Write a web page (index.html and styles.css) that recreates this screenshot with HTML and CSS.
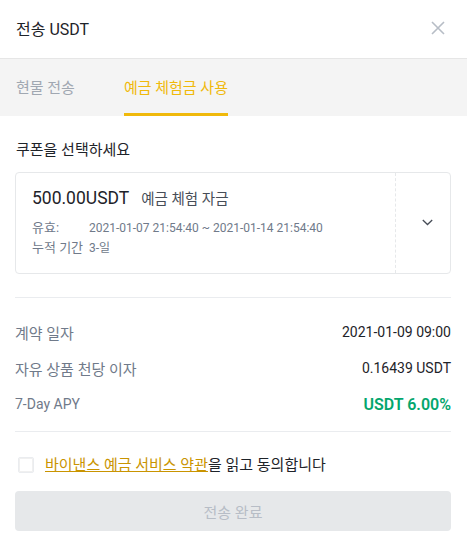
FILE: index.html
```html
<!DOCTYPE html>
<html lang="ko">
<head>
<meta charset="utf-8">
<link rel="stylesheet" href="styles.css">
</head>
<body>
<div class="modal">
  <div class="header">
    <div class="title">전송 USDT</div>
    <svg class="close" width="14" height="14" viewBox="0 0 14 14"><path d="M1 1L13 13M13 1L1 13" stroke="#b7bdc6" stroke-width="1.6" fill="none"/></svg>
  </div>
  <div class="tabs">
    <div class="tab">현물 전송</div>
    <div class="tab active">예금 체험금 사용</div>
  </div>
  <div class="body">
    <div class="section-label">쿠폰을 선택하세요</div>
    <div class="card">
      <div class="card-main">
        <div class="amount-line"><span class="amount">500.00USDT</span><span class="kind">예금 체험 자금</span></div>
        <div class="meta first"><span class="meta-label">유효:</span><span>2021-01-07 21:54:40 ~ 2021-01-14 21:54:40</span></div>
        <div class="meta"><span class="meta-label">누적 기간</span><span>3-일</span></div>
      </div>
      <div class="card-side">
        <svg width="11" height="7" viewBox="0 0 11 7"><path d="M0.8 1L5.5 5.5L10.2 1" stroke="#474d57" stroke-width="1.3" fill="none"/></svg>
      </div>
    </div>
    <div class="divider first"></div>
    <div class="rows">
      <div class="row"><span class="row-label ko">계약 일자</span><span class="row-value">2021-01-09 09:00</span></div>
      <div class="row"><span class="row-label ko">자유 상품 천당 이자</span><span class="row-value">0.16439 USDT</span></div>
      <div class="row"><span class="row-label">7-Day APY</span><span class="row-value green">USDT 6.00%</span></div>
    </div>
    <div class="divider"></div>
    <div class="agree">
      <span class="checkbox"></span>
      <span class="agree-text"><a class="link">바이낸스 예금 서비스 약관</a>을 읽고 동의합니다</span>
    </div>
    <div class="button">전송 완료</div>
  </div>
</div>
</body>
</html>
```
FILE: styles.css
```css
html, body {
  margin: 0;
  padding: 0;
  background: #ffffff;
}
body {
  font-family: "Roboto", "Noto Sans CJK KR", sans-serif;
  color: #1e2329;
}
.modal {
  width: 467px;
}
.header {
  display: flex;
  align-items: center;
  justify-content: space-between;
  padding: 0 22px 0 16px;
  border-bottom: 1px solid #e6e6e6;
  box-sizing: border-box;
  height: 59px;
}
.title {
  font-size: 16px;
  font-weight: 400;
  color: #1e2329;
  margin-top: -2px;
}
.close {
  display: block;
  margin-top: -2px;
}
.tabs {
  height: 57px;
  background: #f4f4f4;
  display: flex;
  padding-left: 16px;
  gap: 49px;
}
.tab {
  font-size: 15px;
  color: #a0a7b1;
  display: flex;
  align-items: center;
  height: 54px;
  border-bottom: 3px solid transparent;
}
.tab.active {
  color: #f0b90b;
  border-bottom-color: #f0b90b;
}
.body {
  padding: 24px 16px 0 15px;
}
.section-label {
  font-size: 15px;
  line-height: 20px;
  color: #1e2329;
  padding-left: 1px;
}
.card {
  margin-top: 12px;
  height: 100px;
  border: 1px solid #e6e8ea;
  border-radius: 4px;
  display: flex;
}
.card-main {
  flex: 1;
  padding: 14px 0 0 16px;
  border-right: 1px dashed #e6e8ea;
}
.amount-line {
  display: flex;
  align-items: baseline;
  height: 26px;
}
.amount {
  font-size: 17.5px;
  color: #1e2329;
}
.kind {
  font-size: 14.5px;
  color: #474d57;
  margin-left: 12px;
}
.meta {
  font-size: 12px;
  color: #707a8a;
  line-height: 20px;
  display: flex;
}
.meta.first {
  margin-top: 5px;
}
.meta-label {
  width: 57px;
  font-size: 13px;
}
.card-side {
  width: 54px;
  display: flex;
  align-items: center;
  padding-left: 26px;
  box-sizing: border-box;
}
.card-side svg {
  display: block;
  margin-top: -2px;
}
.divider {
  height: 1px;
  background: #eaecef;
}
.divider.first {
  margin-top: 23px;
}
.rows {
  padding: 16px 0 9px;
}
.row {
  display: flex;
  justify-content: space-between;
  align-items: center;
  height: 36px;
  font-size: 14px;
}
.row-label {
  color: #707a8a;
}
.row-label.ko {
  font-size: 15px;
}
.row-value {
  color: #1e2329;
}
.row-value.green {
  color: #03a66d;
  font-weight: 600;
  font-size: 16px;
}
.agree {
  display: flex;
  align-items: center;
  margin-top: 23px;
  padding-left: 3px;
  height: 20px;
}
.checkbox {
  width: 14px;
  height: 14px;
  border: 1px solid #eaecef;
  border-radius: 2px;
  box-shadow: inset 0 0 0 1px #f0f0f0;
}
.agree-text {
  margin-left: 11px;
  font-size: 15px;
  line-height: 20px;
  color: #1e2329;
}
.link {
  color: #c99400;
  text-decoration: underline;
}
.button {
  margin-top: 16px;
  height: 40px;
  border-radius: 4px;
  background: #e6e8ea;
  color: #b7bdc6;
  font-size: 15px;
  display: flex;
  align-items: center;
  justify-content: center;
}
```
